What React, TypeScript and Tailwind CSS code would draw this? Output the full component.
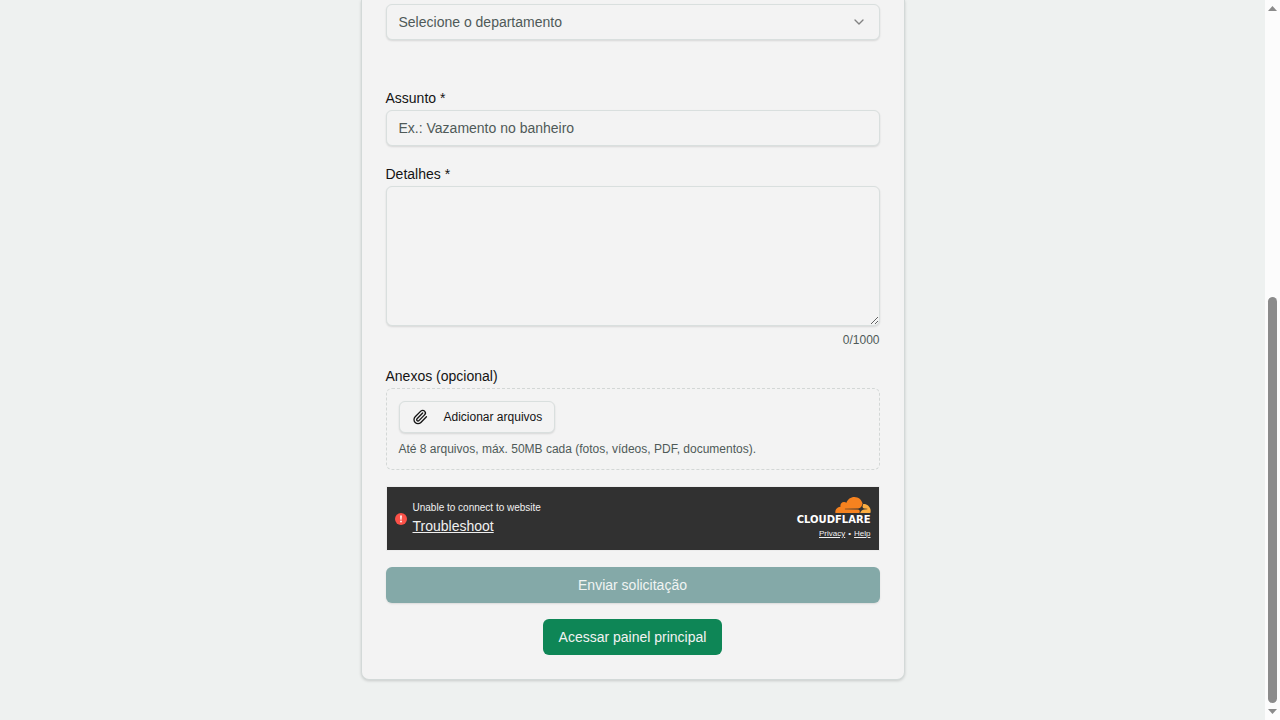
import { useState } from 'react';
import { ChevronDown, Paperclip } from 'lucide-react';

const MAX_DETAILS = 1000;

const fieldClass =
  'block w-full rounded-md border border-[#d9dfde] bg-[#f3f3f3] px-3 text-sm shadow-[0_1px_2px_rgba(0,0,0,0.12)] outline-none placeholder:text-[#4f5a58] focus:ring-1 focus:ring-[#0b5a55]';
const labelClass = 'text-sm leading-4 text-[#141414]';

function CloudflareLogo() {
  return (
    <div className="flex flex-col items-end gap-px">
      <svg viewBox="0 6.57 24 10.86" className="h-4 w-9" aria-hidden="true">
        <path
          fill="#f6821f"
          d="M16.5088 16.8447c.1475-.5068.0908-.9707-.1553-1.3154-.2246-.3164-.6045-.499-1.0615-.5205l-8.6592-.1123a.1559.1559 0 0 1-.1333-.0713c-.0283-.042-.0351-.0986-.021-.1553.0278-.084.1123-.1484.2036-.1562l8.7359-.1123c1.0351-.0489 2.1601-.8868 2.5537-1.9136l.499-1.3013c.0215-.0561.0293-.1128.0147-.168-.5625-2.5463-2.835-4.4453-5.5499-4.4453-2.5039 0-4.6284 1.6177-5.3876 3.8614-.4927-.3658-1.1187-.5625-1.794-.499-1.2026.119-2.1665 1.083-2.2861 2.2856-.0283.31-.0069.6128.0635.894C1.5683 13.171 0 14.7754 0 16.752c0 .1748.0142.3515.0352.5273.0141.083.0844.1475.1689.1475h15.9814c.0909 0 .1758-.0645.2032-.1553l.12-.4268z"
        />
        <path
          fill="#fbad41"
          d="M19.2656 11.2813c-.0771 0-.1611 0-.2383.0112-.0566 0-.1054.0415-.127.0976l-.3378 1.1744c-.1475.5068-.0918.9707.1543 1.3164.2256.3164.6055.498 1.0625.5195l1.8437.1133c.0557 0 .1055.0263.1329.0703.0283.043.0351.1074.0214.1562-.0283.084-.1132.1485-.204.1553l-1.921.1123c-1.041.0488-2.1582.8867-2.5527 1.914l-.1406.3585c-.0283.0713.0215.1416.0986.1416h6.5977c.0771 0 .1474-.0489.169-.126.1122-.4082.1757-.837.1757-1.2803 0-2.6025-2.125-4.727-4.7344-4.727"
        />
      </svg>
      <span className="font-['DejaVu_Sans',sans-serif] text-[10px] leading-3 font-bold text-white">CLOUDFLARE</span>
    </div>
  );
}

function ChallengeWidget() {
  return (
    <div className="mt-4 border border-[#ececec] bg-[#313131]">
      <div className="flex h-[63px] items-center justify-between px-2 text-[#f0f0f0]">
        <div className="flex items-center gap-[6px]">
          <svg viewBox="0 0 12 12" className="size-3" aria-hidden="true">
            <circle cx="6" cy="6" r="6" fill="#fb5148" />
            <path d="M5.1 2.6h1.8l-.3 4.1H5.4z" fill="#fff" />
            <circle cx="6" cy="8.5" r=".9" fill="#fff" />
          </svg>
          <div className="flex flex-col pb-[2px]">
            <span className="text-[10px] leading-4">Unable to connect to website</span>
            <a href="#troubleshoot" className="text-sm leading-5 underline">Troubleshoot</a>
          </div>
        </div>
        <div className="flex flex-col items-end gap-[2px]">
          <CloudflareLogo />
          <div className="flex gap-[3px] text-[8px] leading-3">
            <a href="#privacy" className="underline">Privacy</a>
            <span>•</span>
            <a href="#help" className="underline">Help</a>
          </div>
        </div>
      </div>
    </div>
  );
}

function ScrollRail() {
  return (
    <div className="sticky top-0 flex h-screen w-[15px] shrink-0 flex-col items-center bg-[#fcfcfc] py-[6px]" aria-hidden="true">
      <svg viewBox="0 0 9 5" className="h-[5px] w-[9px] shrink-0">
        <path d="M4.5 0 9 5H0z" fill="#8b8b8b" />
      </svg>
      <div className="flex-[286]" />
      <div className="w-[9px] flex-[405] rounded-full bg-[#8b8b8b]" />
      <svg viewBox="0 0 9 5" className="mt-[6px] h-[5px] w-[9px] shrink-0">
        <path d="M0 0h9L4.5 5z" fill="#8b8b8b" />
      </svg>
    </div>
  );
}

export default function App() {
  const [department, setDepartment] = useState('');
  const [subject, setSubject] = useState('');
  const [details, setDetails] = useState('');

  return (
    <div className="flex min-h-screen bg-[#eef1f0] font-['Liberation_Sans',Arial,sans-serif] text-[#141414]">
      <main className="min-w-0 flex-1 pb-10">
        <form
          onSubmit={(e) => e.preventDefault()}
          className="mx-auto max-w-[544px] rounded-b-lg border border-t-0 border-[#d3d9d8] bg-[#f3f3f3] px-6 pt-1 pb-6 shadow-[0_1px_3px_rgba(0,0,0,0.16)]"
        >
          <div className="relative">
            <select
              aria-label="Departamento"
              value={department}
              onChange={(e) => setDepartment(e.target.value)}
              className={`${fieldClass} h-9 appearance-none text-[#4f5a58]`}
            >
              <option value="">Selecione o departamento</option>
              <option value="manutencao">Manutenção</option>
              <option value="financeiro">Financeiro</option>
            </select>
            <ChevronDown className="pointer-events-none absolute top-[10px] right-[13px] size-4 text-[#141414] opacity-50" />
          </div>

          <div className="mt-[50px] flex flex-col gap-1">
            <label htmlFor="subject" className={labelClass}>Assunto *</label>
            <input
              id="subject"
              type="text"
              value={subject}
              onChange={(e) => setSubject(e.target.value)}
              placeholder="Ex.: Vazamento no banheiro"
              className={`${fieldClass} h-9`}
            />
          </div>

          <div className="mt-5 flex flex-col gap-1">
            <label htmlFor="details" className={labelClass}>Detalhes *</label>
            <textarea
              id="details"
              maxLength={MAX_DETAILS}
              value={details}
              onChange={(e) => setDetails(e.target.value)}
              className={`${fieldClass} h-[140px] py-2`}
            />
            <p className="mt-[2px] text-right text-xs text-[#4f5a58]">{details.length}/{MAX_DETAILS}</p>
          </div>

          <div className="mt-5 flex flex-col gap-1">
            <span className={labelClass}>Anexos (opcional)</span>
            <div className="rounded-md border border-dashed border-[#d3d7d6] p-3">
              <button
                type="button"
                className="flex h-8 items-center gap-4 rounded-md border border-[#d9dfde] bg-[#f3f3f3] px-3 text-xs shadow-[0_1px_2px_rgba(0,0,0,0.12)]"
              >
                <Paperclip className="size-4" />
                Adicionar arquivos
              </button>
              <p className="mt-2 text-xs text-[#4f5a58]">
                Até 8 arquivos, máx. 50MB cada (fotos, vídeos, PDF, documentos).
              </p>
            </div>
          </div>

          <ChallengeWidget />

          <button
            type="submit"
            disabled
            className="mt-4 h-9 w-full rounded-md bg-[#84a9a8] text-sm text-[#f0f4f3] shadow-[0_1px_2px_rgba(0,0,0,0.1)]"
          >
            Enviar solicitação
          </button>
          <div className="mt-4 flex justify-center">
            <a
              href="#painel"
              className="flex h-9 items-center rounded-md bg-[#0e8656] px-4 text-sm text-[#f2f2f2]"
            >
              Acessar painel principal
            </a>
          </div>
        </form>
      </main>
      <ScrollRail />
    </div>
  );
}
